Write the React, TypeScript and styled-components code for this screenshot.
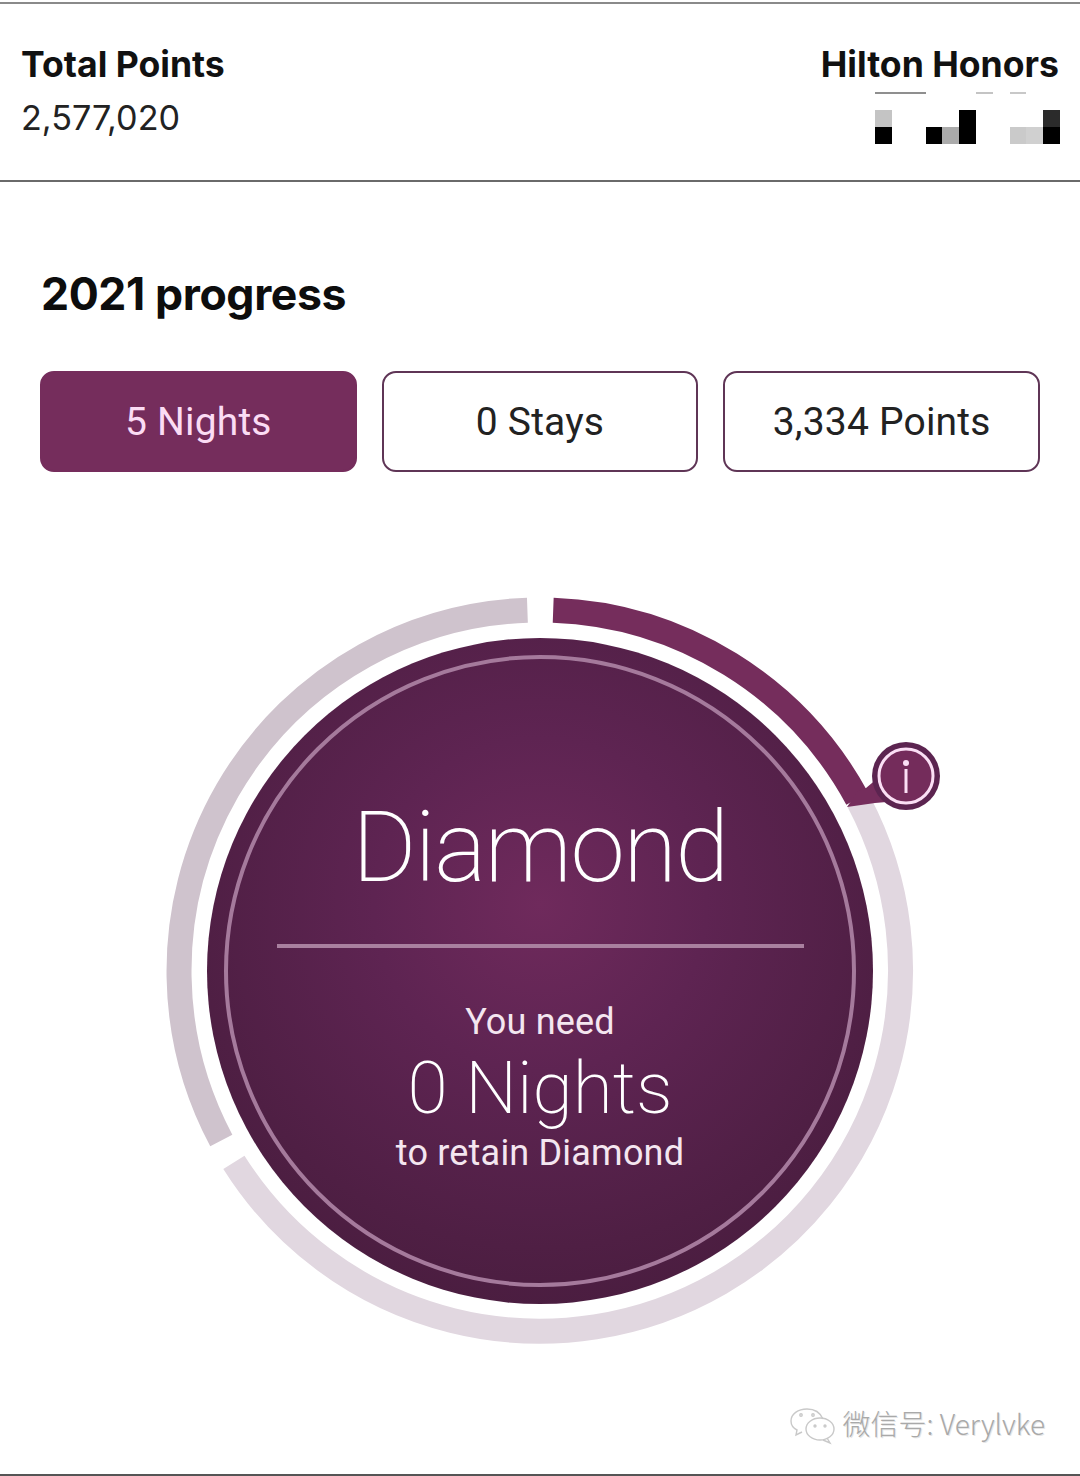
import React from 'react';
import styled, { createGlobalStyle } from 'styled-components';

const GlobalStyle = createGlobalStyle`
  html, body {
    margin: 0;
    padding: 0;
    background: #fff;
  }
  * {
    box-sizing: border-box;
  }
`;

const Page = styled.div`
  position: relative;
  width: 1080px;
  height: 1476px;
  padding-top: 2px;
  overflow: hidden;
  background: #fff;
  color: #111;
  font-family: Inter, 'Liberation Sans', sans-serif;
  border-bottom: 2px solid #555;
`;

const Header = styled.header`
  display: flex;
  justify-content: space-between;
  height: 180px;
  padding: 41px 21px 0 21px;
  border-top: 2px solid #8a8a8a;
  border-bottom: 2px solid #6a6a6a;
`;

const Account = styled.div`
  display: flex;
  flex-direction: column;
  align-items: ${(p: { $end?: boolean }) => (p.$end ? 'flex-end' : 'flex-start')};
`;

const AccountLabel = styled.div`
  font-size: 35.6px;
  line-height: 40px;
  font-weight: 700;
`;

const AccountValue = styled.div`
  margin-top: 13px;
  font-size: 34.2px;
  line-height: 40px;
  font-weight: 400;
  color: #222;
`;

const Mosaic = styled.div`
  display: grid;
  grid-template-columns: repeat(11, 16.8px);
  grid-template-rows: 2px 16px 17px 17px;
  margin-top: 7px;
  margin-right: -1px;
`;

const MosaicCell = styled.span<{ $tone: string }>`
  background: ${(p) => p.$tone};
`;

const Progress = styled.section`
  padding: 0 40px;
`;

const Title = styled.h2`
  margin: 87px 0 0 1px;
  font-size: 44.6px;
  line-height: 50px;
  font-weight: 700;
  letter-spacing: -0.4px;
  color: #0d0d0d;
`;

const Tabs = styled.div`
  display: grid;
  grid-template-columns: repeat(3, 1fr);
  gap: 25px;
  margin-top: 52px;
`;

const Tab = styled.div<{ $active?: boolean }>`
  display: flex;
  align-items: center;
  justify-content: center;
  height: 101px;
  border-radius: 14px;
  border: 2px solid ${(p) => (p.$active ? '#752d5c' : '#5f3556')};
  background: ${(p) => (p.$active ? '#752d5c' : '#fff')};
  color: ${(p) => (p.$active ? '#fbdcf4' : '#222')};
  font-family: Roboto, sans-serif;
  font-size: 39px;
  letter-spacing: 0.2px;
`;

const Gauge = styled.div`
  position: relative;
  width: 666px;
  height: 666px;
  margin: 166px auto 0;
`;

const Ring = styled.svg`
  position: absolute;
  left: -47px;
  top: -47px;
  width: 760px;
  height: 760px;
  overflow: visible;
`;

const Dial = styled.div`
  position: relative;
  display: flex;
  flex-direction: column;
  align-items: center;
  width: 666px;
  height: 666px;
  border-radius: 50%;
  padding-top: 152px;
  color: #fff;
  font-family: Roboto, sans-serif;
  background: radial-gradient(circle at 50% 40%, #6f2a5c 0%, #5e2452 32%, #4f1f44 66%, #431a39 100%);
`;

const Tier = styled.div`
  font-size: 98px;
  line-height: 116px;
  font-weight: 200;
  letter-spacing: -1.6px;
`;

const Divider = styled.hr`
  width: 527px;
  height: 4px;
  margin: 38px 0 0;
  border: 0;
  background: #a9809f;
`;

const Need = styled.div`
  margin-top: 52px;
  font-size: 36px;
  line-height: 44px;
  font-weight: 400;
  letter-spacing: 0.2px;
  color: #f4e6f0;
`;

const NeedCount = styled.div`
  margin-top: 2px;
  font-size: 73px;
  line-height: 84px;
  font-weight: 200;
`;

const NeedNote = styled.div`
  margin-top: 1px;
  font-size: 36px;
  line-height: 44px;
  font-weight: 400;
  letter-spacing: 0.2px;
  color: #f4e6f0;
`;

const Watermark = styled.div`
  position: absolute;
  right: 35px;
  bottom: 29px;
  display: flex;
  align-items: center;
  gap: 6px;
  font-family: 'Noto Sans CJK SC', 'Liberation Sans', sans-serif;
  font-size: 28px;
  line-height: 40px;
  font-weight: 300;
  color: #a9a9a9;
  text-shadow: 1px 1px 0 #e6e6e6;
`;

const WeChatIcon = styled.svg`
  width: 48px;
  height: 38px;
  margin-top: 6px;
`;

const CX = 380;
const CY = 380;

const polar = (r: number, deg: number) => {
  const a = (deg * Math.PI) / 180;
  return [CX + r * Math.sin(a), CY - r * Math.cos(a)];
};

// clockwise arc, angles measured from 12 o'clock
const arc = (r: number, from: number, to: number) => {
  const [x1, y1] = polar(r, from);
  const [x2, y2] = polar(r, to);
  const large = to - from > 180 ? 1 : 0;
  return `M${x1.toFixed(1)} ${y1.toFixed(1)}A${r} ${r} 0 ${large} 1 ${x2.toFixed(1)} ${y2.toFixed(1)}`;
};

const blank = 'transparent';
const mosaicCells = [
  // thin rule row
  '#8f8f8f', '#8f8f8f', '#8f8f8f', blank, blank, blank, '#c4c4c4', blank, '#c8c8c8', blank, blank,
  // spacer row
  ...Array(11).fill(blank),
  // upper row
  '#c4c4c4', blank, blank, blank, blank, '#000', blank, blank, blank, blank, '#2b2b2b',
  // lower row
  '#000', blank, blank, '#000', '#ababab', '#000', blank, blank, '#cacaca', '#d0d0d0', '#000',
];

export default function App() {
  return (
    <Page>
      <GlobalStyle />
      <Header>
        <Account>
          <AccountLabel>Total Points</AccountLabel>
          <AccountValue>2,577,020</AccountValue>
        </Account>
        <Account $end>
          <AccountLabel>Hilton Honors</AccountLabel>
          <Mosaic>
            {mosaicCells.map((tone, i) => (
              <MosaicCell key={i} $tone={tone} />
            ))}
          </Mosaic>
        </Account>
      </Header>
      <Progress>
        <Title>2021 progress</Title>
        <Tabs>
          <Tab $active>5 Nights</Tab>
          <Tab>0 Stays</Tab>
          <Tab>3,334 Points</Tab>
        </Tabs>
        <Gauge>
          <Ring viewBox="0 0 760 760">
            <path d={arc(361, 62, 238)} fill="none" stroke="#e1d7e0" strokeWidth="25" />
            <path d={arc(361, 242, 358)} fill="none" stroke="#cfc3cd" strokeWidth="25" />
            <path d={arc(361, 2.1, 61.5)} fill="none" stroke="#752d5c" strokeWidth="25" />
            <path d="M687 216L698 200L706 197L724 182L738 210L715 212Z" fill="#752d5c" />
            <circle cx="746" cy="185" r="34" fill="#5c2450" />
            <circle cx="746" cy="185" r="27" fill="#742c5b" stroke="#fbdff5" strokeWidth="3" />
            <circle cx="746" cy="172" r="3" fill="#fbdff5" />
            <rect x="744.5" y="178" width="3" height="24" fill="#fbdff5" />
          </Ring>
          <Dial>
            <Ring viewBox="0 0 760 760">
              <circle cx={CX} cy={CY} r="314" fill="none" stroke="#a57a9c" strokeWidth="4" />
            </Ring>
            <Tier>Diamond</Tier>
            <Divider />
            <Need>You need</Need>
            <NeedCount>0 Nights</NeedCount>
            <NeedNote>to retain Diamond</NeedNote>
          </Dial>
        </Gauge>
      </Progress>
      <Watermark>
        <WeChatIcon viewBox="0 0 48 38" fill="none" stroke="#c9c9c9" strokeWidth="1.4">
          <path d="M18 2C9 2 2 7 2 14c0 4 2 7 6 9l-1 5 6-3" />
          <path d="M34 12C31 5 25 2 18 2" />
          <ellipse cx="31" cy="22" rx="14" ry="11" />
          <path d="M38 31l3 5-7-3" />
          <circle cx="12" cy="8" r="1.2" />
          <circle cx="24" cy="8" r="1.2" />
          <circle cx="26" cy="19" r="1" />
          <circle cx="36" cy="19" r="1" />
        </WeChatIcon>
        <span>微信号: Verylvke</span>
      </Watermark>
    </Page>
  );
}
